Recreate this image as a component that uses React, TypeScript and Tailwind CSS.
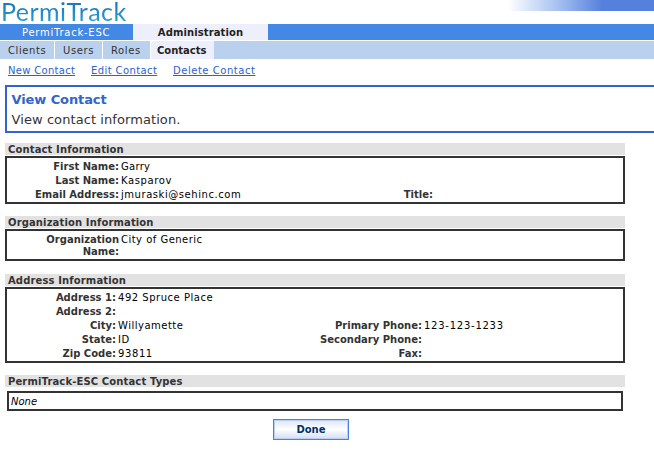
import type { ReactNode } from 'react';

type FieldProps = { label: ReactNode; value?: string; labelClass: string; valueClass?: string };

function Field({ label, value, labelClass, valueClass = '' }: FieldProps) {
  return (
    <div className="flex gap-[2px] leading-[14px]">
      <div className={`text-right font-bold text-[#333] ${labelClass}`}>{label}</div>
      <div className={`text-black ${valueClass}`}>{value}</div>
    </div>
  );
}

function SectionTitle({ children }: { children: string }) {
  return (
    <h2 className="h-3 w-[620px] bg-[#e3e2e3] pl-[3px] text-[10px] leading-[13px] font-bold tracking-[0.13px] text-[#333]">
      {children}
    </h2>
  );
}

export default function App() {
  return (
    <div className="h-[451px] w-[654px] overflow-hidden bg-white text-[10px] whitespace-nowrap text-[#333] [font-family:'DejaVu_Sans',Verdana,sans-serif]">
      <header className="flex h-6 items-start justify-between">
        <div className="h-6 w-[140px] bg-linear-to-b from-[#1a6fb8] to-[#2ba3cf] bg-clip-text pl-px text-[25px] leading-[23px] tracking-[0.45px] text-transparent [font-family:Lato,sans-serif]">
          PermiTrack
        </div>
        <div className="h-[11px] w-[146px] bg-linear-to-r from-white via-[#a4bff0] via-35% to-[#5580dc] to-65%" />
      </header>

      <nav className="flex h-4 bg-[#4488e6] leading-[18px]">
        <div className="w-[133px] pl-[22px] tracking-[0.75px] text-white">PermiTrack-ESC</div>
        <div className="w-[135px] bg-[#eeeffc] text-center font-bold tracking-[0.1px] text-[#222]">Administration</div>
      </nav>
      <nav className="mt-px flex h-[18px] bg-[#b9d1ed] leading-5">
        <div className="w-[55px] border-r border-white pl-2 tracking-[0.6px]">Clients</div>
        <div className="w-[48px] border-r border-white pl-2 tracking-[0.6px]">Users</div>
        <div className="w-[48px] border-r border-white pl-2 tracking-[0.6px]">Roles</div>
        <div className="w-[63px] bg-[#eeeffc] pl-[6px] font-bold text-[#222]">Contacts</div>
      </nav>

      <div className="mt-[5px] flex h-[21px] gap-4 pl-2 leading-[14px] text-[#2b62cf]">
        <a className="w-[67px] tracking-[0.3px] underline">New Contact</a>
        <a className="w-[66px] tracking-[0.4px] underline">Edit Contact</a>
        <a className="tracking-[0.53px] underline">Delete Contact</a>
      </div>

      <main className="pl-[5px]">
        <div className="h-12 w-[660px] border-2 border-[#3066cc] pl-[4.5px]">
          <h1 className="pt-[4px] text-[13px] leading-[18px] font-bold tracking-[-0.1px] text-[#3066cc]">View Contact</h1>
          <p className="text-[13px] leading-[21px] tracking-[0.08px]">View contact information.</p>
        </div>

        <section className="mt-[10px]">
          <SectionTitle>Contact Information</SectionTitle>
          <div className="mt-px flex h-12 w-[620px] border-2 border-[#333] pt-[2px]">
            <div className="w-[312px]">
              <Field labelClass="w-[112px]" label="First Name:" value="Garry" valueClass="tracking-[0.3px]" />
              <Field labelClass="w-[112px]" label="Last Name:" value="Kasparov" valueClass="tracking-[0.6px]" />
              <Field labelClass="w-[112px]" label="Email Address:" value="jmuraski@sehinc.com" valueClass="tracking-[0.55px]" />
            </div>
            <div className="mt-7">
              <Field labelClass="w-[114px]" label="Title:" />
            </div>
          </div>
        </section>

        <section className="mt-3">
          <SectionTitle>Organization Information</SectionTitle>
          <div className="mt-px flex h-8 w-[620px] gap-[2px] border-2 border-[#333] pt-[3px] leading-3">
            <div className="w-[112px] text-right font-bold">Organization<br />Name:</div>
            <div className="tracking-[0.48px] text-black">City of Generic</div>
          </div>
        </section>

        <section className="mt-[13px]">
          <SectionTitle>Address Information</SectionTitle>
          <div className="mt-px flex h-[76px] w-[620px] border-2 border-[#333] pt-[2px]">
            <div className="w-[300px]">
              <Field labelClass="w-[109px]" label="Address 1:" value="492 Spruce Place" valueClass="tracking-[0.52px]" />
              <Field labelClass="w-[109px]" label="Address 2:" />
              <Field labelClass="w-[109px]" label="City:" value="Willyamette" valueClass="tracking-[0.5px]" />
              <Field labelClass="w-[109px]" label="State:" value="ID" valueClass="tracking-[0.6px]" />
              <Field labelClass="w-[109px]" label="Zip Code:" value="93811" valueClass="tracking-[0.6px]" />
            </div>
            <div className="mt-7">
              <Field labelClass="w-[115px]" label="Primary Phone:" value="123-123-1233" valueClass="tracking-[0.75px]" />
              <Field labelClass="w-[115px]" label="Secondary Phone:" />
              <Field labelClass="w-[115px]" label="Fax:" />
            </div>
          </div>
        </section>

        <section className="mt-3">
          <SectionTitle>PermiTrack-ESC Contact Types</SectionTitle>
          <div className="mt-1 ml-0.5 h-5 w-[616px] border-2 border-[#333] pl-0.5 leading-[18px] text-black italic">None</div>
        </section>

        <button className="mt-2 ml-[268px] block h-[21px] w-[76px] border border-[#4784df] bg-linear-to-b from-[#dfe4fb] via-white to-[#d5dcf7] text-center leading-[19px] font-bold text-[#003068] shadow-[inset_0_0_0_1px_#b8d0f4]">
          Done
        </button>
      </main>
    </div>
  );
}
